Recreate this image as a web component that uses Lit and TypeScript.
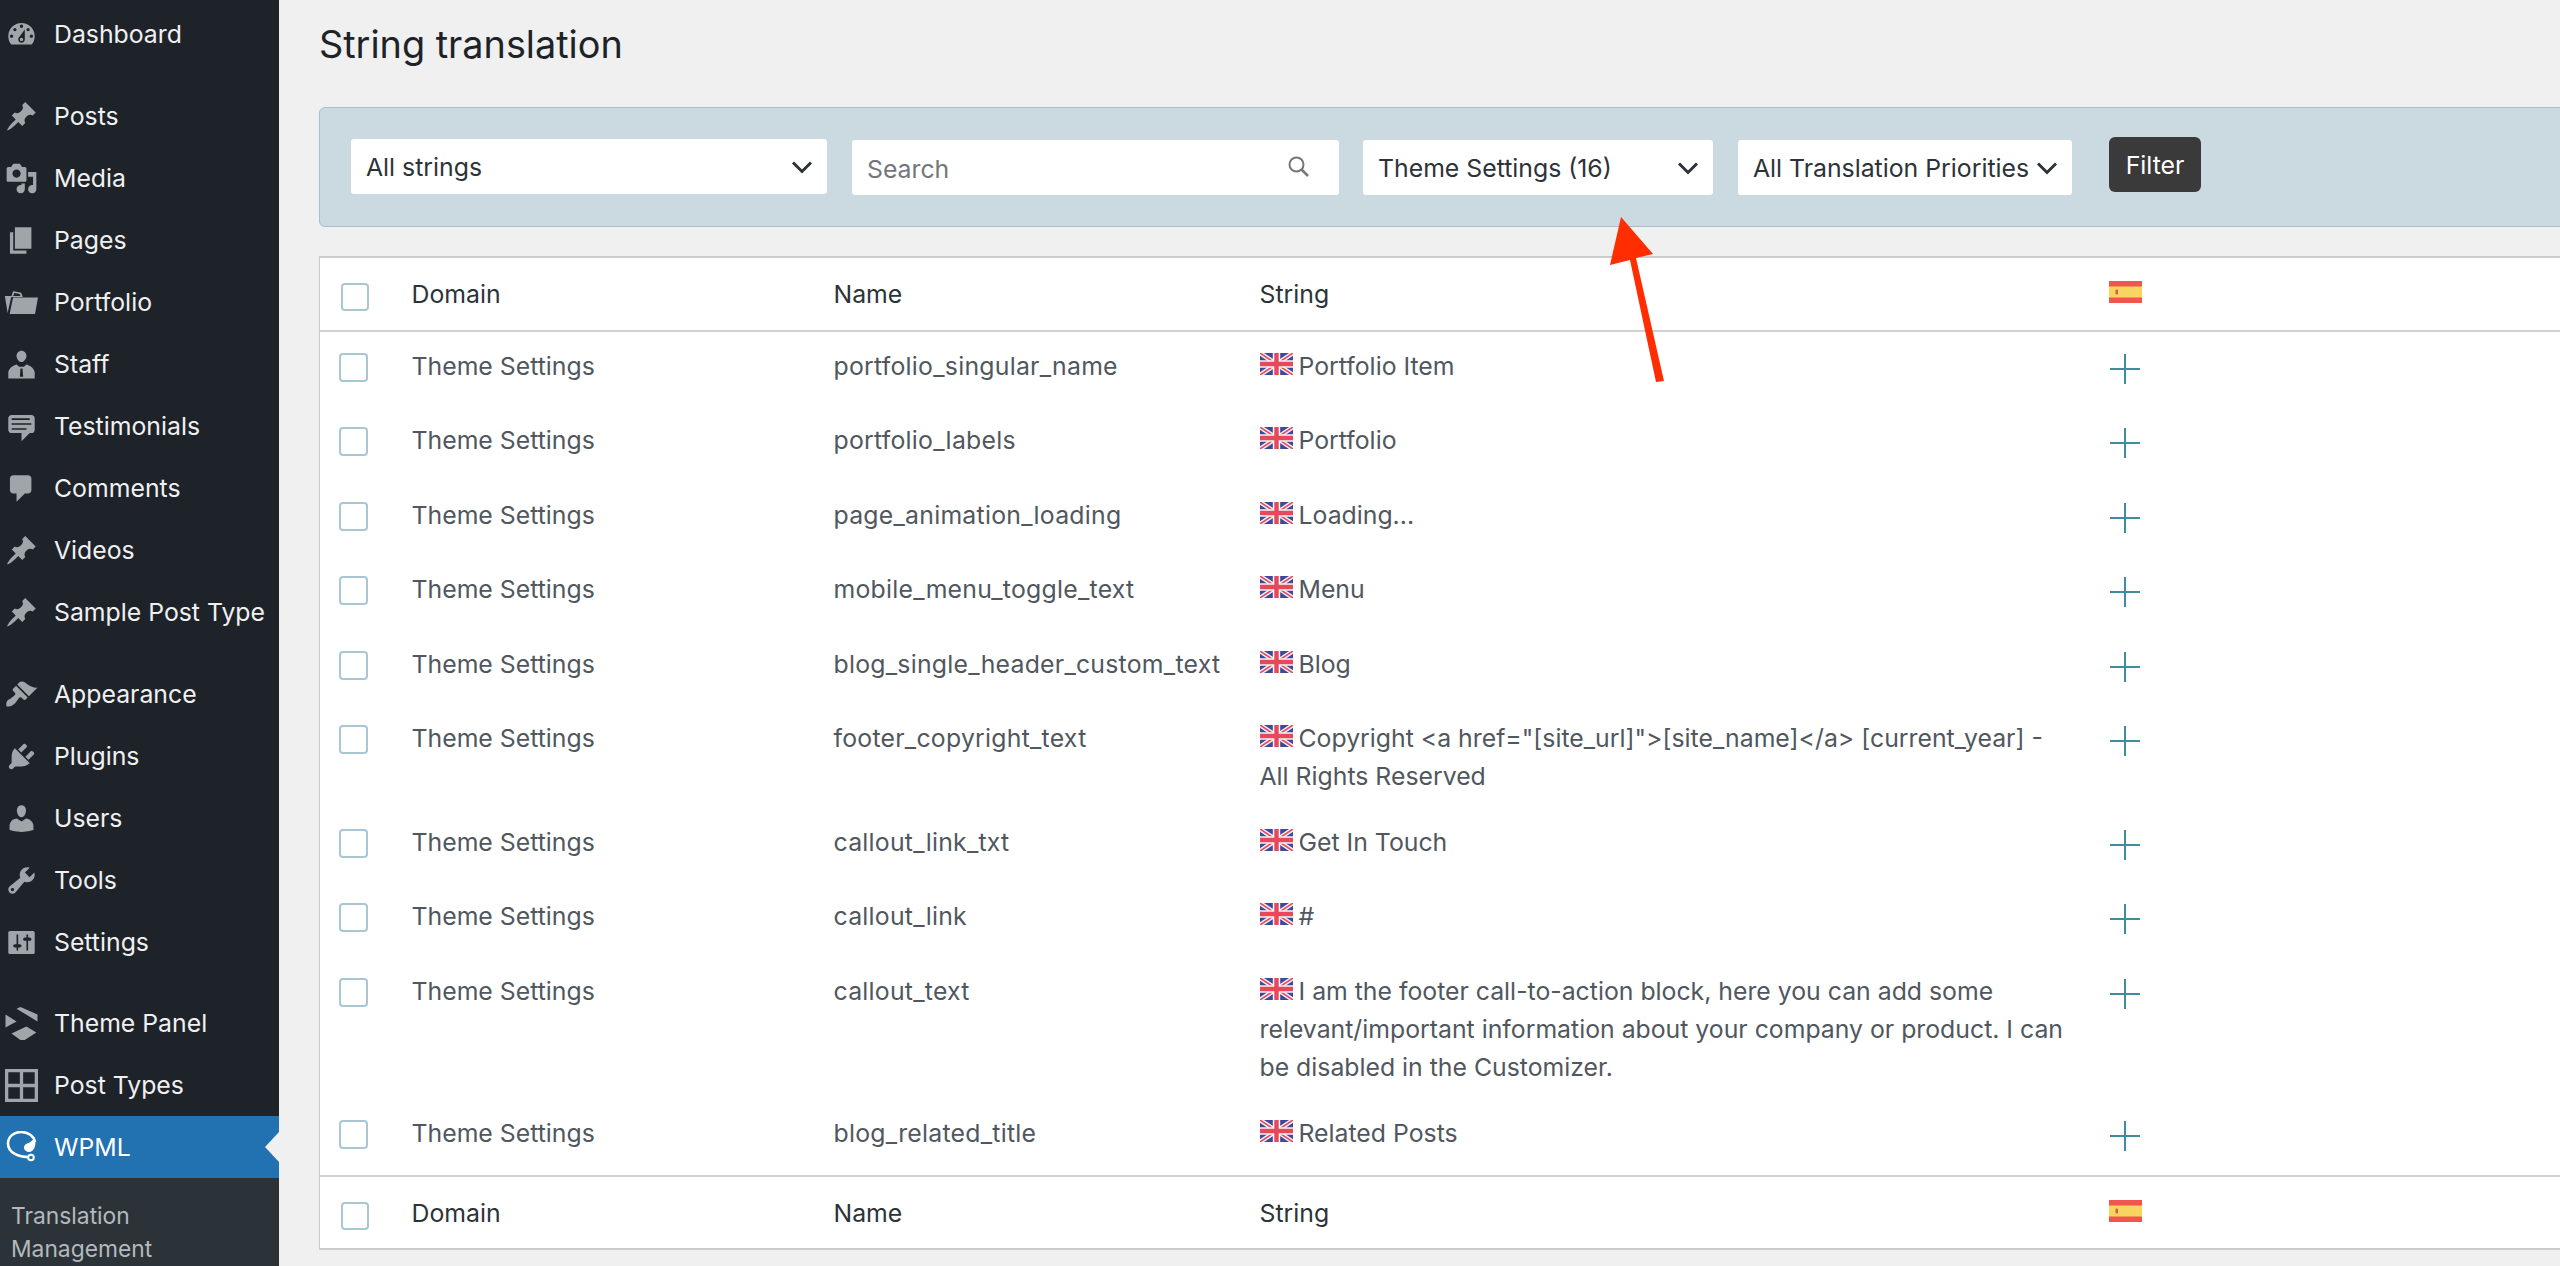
import { LitElement, html, css } from 'lit';
import { customElement } from 'lit/decorators.js';

const PIN = 'M10.44 3.02l1.82-1.82 6.36 6.35-1.83 1.82c-1.05-.68-2.48-.57-3.41.36l-.75.75c-.92.93-1.04 2.35-.35 3.41l-1.83 1.82-2.41-2.41-2.8 2.79c-.42.42-3.38 2.71-3.8 2.29s1.86-3.39 2.28-3.81l2.79-2.79L4.1 9.36l1.83-1.82c1.05.69 2.48.57 3.4-.36l.75-.75c.93-.92 1.05-2.35.36-3.41z';

const ICONS: Record<string, string> = {
  dashboard: 'M3.76 16h12.48c1.1-1.37 1.76-3.11 1.76-5 0-4.42-3.58-8-8-8s-8 3.58-8 8c0 1.89.66 3.63 1.76 5zM10 4c.55 0 1 .45 1 1s-.45 1-1 1-1-.45-1-1 .45-1 1-1zM6 6c.55 0 1 .45 1 1s-.45 1-1 1-1-.45-1-1 .45-1 1-1zm8 0c.55 0 1 .45 1 1s-.45 1-1 1-1-.45-1-1 .45-1 1-1zm-5.37 5.55L12 7v6c0 1.1-.9 2-2 2s-2-.9-2-2c0-.57.24-1.08.63-1.45zM4 10c.55 0 1 .45 1 1s-.45 1-1 1-1-.45-1-1 .45-1 1-1zm12 0c.55 0 1 .45 1 1s-.45 1-1 1-1-.45-1-1 .45-1 1-1zm-5 3c0-.55-.45-1-1-1s-1 .45-1 1 .45 1 1 1 1-.45 1-1z',
  pin: PIN,
  media: 'M13 11V4c0-.55-.45-1-1-1h-1.67L9 1H5L3.67 3H2c-.55 0-1 .45-1 1v7c0 .55.45 1 1 1h10c.55 0 1-.45 1-1zM7 4.5c1.38 0 2.5 1.12 2.5 2.5S8.38 9.5 7 9.5 4.5 8.38 4.5 7 5.62 4.5 7 4.5zM14 6h5v10.5c0 1.38-1.12 2.5-2.5 2.5S14 17.88 14 16.5s1.12-2.5 2.5-2.5c.17 0 .34.02.5.05V9h-3V6zm-4 8.05V13h2v3.5c0 1.38-1.12 2.5-2.5 2.5S7 17.88 7 16.5 8.12 14 9.5 14c.17 0 .34.02.5.05z',
  page: 'M6 15V2h10v13H6zm-1 1h8v2H3V5h2v11z',
  portfolio: 'M4 6H.4c-.3 0-.5.2-.4.6L1.6 16.4 3.6 7.4c.1-.5.5-.7.9-.7H10.8L10 4.6C9.900 4.200 9.600 3.900 9.200 3.900L5.400 3.200c-.4 0-.7.2-.8.6L4 6zm1 0l.6-1.8 3.3.6.4 1.2H5zM2.800 17h15.400l1.800-10H4.900L2.800 17z',
  staff: 'M10 1.6c1.7 0 3 1.4 3 3.1 0 1.9-1.3 3.8-3 3.8s-3-1.9-3-3.8c0-1.7 1.3-3.1 3-3.1zM2 18.5V15c0-2.5 2.6-4.2 5-5l1.6 1.4h2.8L13 10c2.4.8 5 2.5 5 5v3.5H2zM9.400 12.400l-.4 5h2l-.4-5H9.400z',
  testimonial: 'M4 3h12c.55 0 1.02.2 1.41.59S18 4.45 18 5v7c0 .55-.2 1.02-.59 1.41S16.55 14 16 14h-1l-5 5v-5H4c-.55 0-1.02-.2-1.41-.59S2 12.55 2 12V5c0-.55.2-1.02.59-1.41S3.45 3 4 3zm11 2H4v1h11V5zm1 3H4v1h12V8zm-3 3H4v1h9v-1z',
  comments: 'M5 2h9c1.1 0 2 .9 2 2v7c0 1.1-.9 2-2 2h-2l-5 5v-5H5c-1.1 0-2-.9-2-2V4c0-1.1.9-2 2-2z',
  appearance: 'M14.48 11.06L7.41 3.99l1.5-1.5c.5-.56 2.3-.47 3.51.32 1.21.8 1.43 1.28 2.91 2.1 1.18.64 2.45 1.26 4.45.85zm-.71.71L6.7 4.7 4.93 6.47c-.39.39-.39 1.02 0 1.41l1.06 1.06c.39.39.39 1.03 0 1.42-.6.6-1.43 1.11-2.21 1.69-.35.26-.7.53-1.01.84C1.43 13.23.4 14.85.89 17.11c2.26.49 3.88-.54 5.22-1.88.31-.31.58-.66.84-1.01.58-.78 1.09-1.61 1.69-2.21.39-.39 1.03-.39 1.42 0l1.06 1.06c.39.39 1.02.39 1.41 0z',
  plugins: 'M13.11 4.36L9.87 7.6 8 5.73l3.24-3.24c.35-.34 1.05-.2 1.56.32.52.51.66 1.21.31 1.55zm-8 1.77l.91-1.12 9.01 9.01-1.19.84c-.71.71-2.63 1.16-3.82 1.16H6.14L4.9 17.26c-.59.59-1.54.59-2.12 0-.59-.58-.59-1.53 0-2.12l1.24-1.24v-3.88c0-1.13.4-3.19 1.09-3.89zm7.26 3.97l3.24-3.24c.34-.35 1.04-.21 1.55.31.52.51.66 1.21.31 1.55l-3.24 3.25z',
  users: 'M10 9.25c-2.27 0-2.73-3.44-2.73-3.44C7 4.02 7.82 2 9.97 2c2.16 0 2.98 2.02 2.71 3.81 0 0-.41 3.44-2.68 3.44zm0 2.57L12.72 10c2.39 0 4.52 2.33 4.52 4.53v2.49s-3.65 1.13-7.24 1.13c-3.65 0-7.24-1.13-7.24-1.13v-2.49c0-2.25 1.94-4.48 4.47-4.48z',
  tools: 'M16.68 9.77c-1.34 1.34-3.3 1.67-4.95.99l-5.41 6.52c-.99.99-2.59.99-3.58 0s-.99-2.59 0-3.57l6.52-5.42c-.68-1.65-.35-3.61.99-4.95 1.28-1.28 3.12-1.62 4.72-1.06l-2.89 2.89 2.82 2.82 2.86-2.87c.53 1.58.18 3.39-1.08 4.65zM3.81 16.21c.4.39 1.04.39 1.43 0 .4-.4.4-1.04 0-1.43-.39-.4-1.03-.4-1.43 0-.39.39-.39 1.03 0 1.43z',
  settings: 'M18 16V4c0-.55-.45-1-1-1H3c-.55 0-1 .45-1 1v12c0 .55.45 1 1 1h14c.55 0 1-.45 1-1zM8 11h1c.55 0 1 .45 1 1s-.45 1-1 1H8v1.5c0 .28-.22.5-.5.5s-.5-.22-.5-.5V13H6c-.55 0-1-.45-1-1s.45-1 1-1h1V5.5c0-.28.22-.5.5-.5s.5.22.5.5V11zm5-2h-1c-.55 0-1-.45-1-1s.45-1 1-1h1V5.5c0-.28.22-.5.5-.5s.5.22.5.5V7h1c.55 0 1 .45 1 1s-.45 1-1 1h-1v5.5c0 .28-.22.5-.5.5s-.5-.22-.5-.5V9z',
  panel: 'M7 1 9.400 0 19.700 4.500V8.800zM.3 4.500 7 8.800 .3 12.400zM3.900 16 13 11.800 19 15.500 10.600 20.900z',
  grid: 'M0 0H20V20H0zM2 2V9H9V2zM11 2V9H18V2zM2 11V18H9V11zM11 11V18H18V11z',
};

interface MenuItem {
  label: string;
  icon: string;
  gap?: number;
}

const MENU: MenuItem[] = [
  { label: 'Dashboard', icon: 'dashboard' },
  { label: 'Posts', icon: 'pin', gap: 1 },
  { label: 'Media', icon: 'media' },
  { label: 'Pages', icon: 'page' },
  { label: 'Portfolio', icon: 'portfolio' },
  { label: 'Staff', icon: 'staff' },
  { label: 'Testimonials', icon: 'testimonial' },
  { label: 'Comments', icon: 'comments' },
  { label: 'Videos', icon: 'pin' },
  { label: 'Sample Post Type', icon: 'pin' },
  { label: 'Appearance', icon: 'appearance', gap: 1 },
  { label: 'Plugins', icon: 'plugins' },
  { label: 'Users', icon: 'users' },
  { label: 'Tools', icon: 'tools' },
  { label: 'Settings', icon: 'settings' },
  { label: 'Theme Panel', icon: 'panel', gap: 2 },
  { label: 'Post Types', icon: 'grid' },
];

const ROWS: [string, string][] = [
  ['portfolio_singular_name', 'Portfolio Item'],
  ['portfolio_labels', 'Portfolio'],
  ['page_animation_loading', 'Loading...'],
  ['mobile_menu_toggle_text', 'Menu'],
  ['blog_single_header_custom_text', 'Blog'],
  ['footer_copyright_text', 'Copyright <a href="[site_url]">[site_name]</a> [current_year] - All Rights Reserved'],
  ['callout_link_txt', 'Get In Touch'],
  ['callout_link', '#'],
  ['callout_text', 'I am the footer call-to-action block, here you can add some relevant/important information about your company or product. I can be disabled in the Customizer.'],
  ['blog_related_title', 'Related Posts'],
];

const chevron = html`<svg class="chev" viewBox="0 0 22 14"><path d="M2 2.500 11 11.500 20 2.500" fill="none" stroke="#2c3338" stroke-width="3"/></svg>`;

const ukFlag = html`<svg class="uk" viewBox="0 0 33 22">
  <rect width="33" height="22" fill="#41479b"/>
  <path d="M0 0 33 22M33 0 0 22" stroke="#f5f5f5" stroke-width="4.400"/>
  <path d="M0 0 33 22M33 0 0 22" stroke="#e8485c" stroke-width="1.600"/>
  <path d="M16.500 0V22M0 11H33" stroke="#f5f5f5" stroke-width="7.400"/>
  <path d="M16.500 0V22M0 11H33" stroke="#e8485c" stroke-width="4.400"/>
</svg>`;

const esFlag = html`<svg class="es" viewBox="0 0 33 22">
  <rect width="33" height="22" fill="#f1554f"/>
  <rect y="5.500" width="33" height="11" fill="#f8d55e"/>
  <rect x="6.500" y="8.500" width="2.500" height="5" rx="1" fill="#e2574c"/>
</svg>`;

const plus = html`<svg class="plus" viewBox="0 0 30 30"><path d="M15 0V30M0 15H30" stroke="#3f8c9c" stroke-width="2"/></svg>`;

@customElement('app-root')
export class AppRoot extends LitElement {
  static styles = css`
    :host {
      display: block;
      position: relative;
      width: 2560px;
      height: 1266px;
      overflow: hidden;
      background: #f0f0f1;
      font-family: Inter, 'Noto Sans', sans-serif;
      font-size: 24.8px;
      color: #50575e;
    }
    * { box-sizing: border-box; }
    .page { display: flex; height: 1266px; }

    .side {
      flex: 0 0 279px;
      background: #1e2329;
      padding-top: 3px;
      overflow: hidden;
    }
    .item {
      display: flex;
      align-items: center;
      height: 62px;
      padding-left: 5px;
      color: #f0f0f1;
      white-space: nowrap;
    }
    .item.gap1 { margin-top: 20px; }
    .item.gap2 { margin-top: 19px; }
    .item svg { width: 33px; height: 33px; margin-right: 16px; fill: #a0a5aa; flex: none; }
    .item.current {
      position: relative;
      background: #2271b1;
      color: #fff;
    }
    .item.current svg { fill: none; }
    .item.current::after {
      content: '';
      position: absolute;
      right: 0;
      top: 16px;
      border: 15px solid transparent;
      border-right: 14px solid #f0f0f1;
      border-left: 0;
    }
    .sub {
      height: 100%;
      background: #2c3338;
      padding: 21px 11px;
      color: #b4b9be;
      font-size: 22.8px;
      line-height: 33px;
    }

    .main { flex: 1; min-width: 0; padding-left: 40px; overflow: hidden; }
    h1 {
      margin: 19px 0 38px;
      font-size: 37.8px;
      line-height: 50px;
      font-weight: 400;
      color: #1d2327;
    }

    .bar {
      display: flex;
      align-items: flex-start;
      width: 2300px;
      height: 120px;
      padding: 29px 0 0 31px;
      background: #cbd9e0;
      border: 1.5px solid #a6bfcd;
      border-radius: 6px;
    }
    .field {
      display: flex;
      align-items: center;
      justify-content: space-between;
      flex: none;
      height: 55px;
      margin-top: 3px;
      padding: 0 15px;
      background: #fff;
      border-radius: 3px;
      color: #2c3338;
      white-space: nowrap;
    }
    .chev { width: 22px; height: 14px; flex: none; margin-right: -1px; }
    .f1 { width: 476px; margin-top: 2px; margin-right: 25px; }
    .f2 { width: 487px; margin-right: 24px; color: #72777c; padding-top: 2px; }
    .f2 svg { width: 26px; height: 26px; margin-right: 12px; margin-top: -3px; }
    .f3 { width: 350px; margin-right: 25px; }
    .f4 { width: 334px; margin-right: 37px; padding-right: 15px; }
    .filter {
      width: 92px;
      height: 55px;
      line-height: 57px;
      text-align: center;
      flex: none;
      background: #3a3a3a;
      color: #fff;
      border-radius: 6px;
    }

    .table {
      width: 2300px;
      margin-top: 29px;
      background: #fff;
      border: 2px solid #c9cbcd;
      border-right: 0;
      border-left-width: 1.5px;
    }
    .row, .head, .foot {
      display: grid;
      grid-template-columns: 91.5px 422px 426px 849px 1fr;
      line-height: 38px;
    }
    .row { min-height: 74.4px; }
    .row:nth-last-child(2) { min-height: 76.5px; }
    .row > div { padding-top: 15px; padding-bottom: 13px; }
    .row .str { padding-right: 39px; }
    .row .name { letter-spacing: 0.25px; }
    .head {
      height: 74px;
      padding-top: 17px;
      border-bottom: 2px solid #cfd1d3;
      color: #2c3338;
    }
    .foot {
      height: 73px;
      padding-top: 17px;
      border-top: 2px solid #cfd1d3;
      color: #2c3338;
    }
    .row > .cb-cell, .row > .act { padding: 0; }
    .cb {
      display: block;
      width: 29px;
      height: 29px;
      background: #fff;
      border: 2px solid #a9c6d3;
      border-radius: 4px;
    }
    .row .cb { margin: 21px 0 0 19px; }
    .head .cb { margin: 8px 0 0 21px; width: 28px; height: 28px; }
    .foot .cb { margin: 8px 0 0 21px; width: 28px; height: 28px; }
    .uk { width: 33px; height: 22px; vertical-align: 0; margin-right: 6px; }
    .es { display: block; width: 33px; height: 22px; }
    .head .es { margin-top: 6px; }
    .foot .es { margin-top: 6px; }
    .plus { display: block; width: 30px; height: 30px; margin: 22px 0 0 1px; }

    .arrow { position: absolute; left: 1600px; top: 210px; width: 80px; height: 180px; }
  `;

  renderIcon(name: string) {
    return html`<svg viewBox="0 0 20 20"><path fill-rule="evenodd" d=${ICONS[name]}/></svg>`;
  }

  render() {
    return html`
      <div class="page">
        <nav class="side">
          ${MENU.map(m => html`<div class="item ${m.gap ? `gap${m.gap}` : ''}">${this.renderIcon(m.icon)}${m.label}</div>`)}
          <div class="item current">
            <svg viewBox="0 0 33 33">
              <path d="M24 26C14 26 3 22 3 12.500 3 5.500 9 1 16 1 23 1 29 5 30 11" stroke="#fff" stroke-width="2.600" fill="none"/>
              <path d="M29.500 6C31 11 31 17 27 20 24 22 19.500 20.500 19 17 18.800 13.500 22 12.500 24.500 11.500 26.500 10.500 28.500 8.500 29.500 6z" fill="#fff"/>
              <circle cx="26" cy="26.500" r="2.800" stroke="#fff" stroke-width="2" fill="none"/>
            </svg>
            WPML
          </div>
          <div class="sub">Translation<br />Management</div>
        </nav>
        <main class="main">
          <h1>String translation</h1>
          <div class="bar">
            <div class="field f1">All strings ${chevron}</div>
            <div class="field f2">Search
              <svg viewBox="0 0 26 26"><circle cx="10.500" cy="10.500" r="7" fill="none" stroke="#777" stroke-width="2"/><path d="M15.500 15.500 22 22" stroke="#777" stroke-width="2.500"/></svg>
            </div>
            <div class="field f3">Theme Settings (16) ${chevron}</div>
            <div class="field f4">All Translation Priorities ${chevron}</div>
            <div class="filter">Filter</div>
          </div>
          <div class="table">
            <div class="head">
              <div><span class="cb"></span></div><div>Domain</div><div>Name</div><div>String</div><div>${esFlag}</div>
            </div>
            ${ROWS.map(([name, text]) => html`
              <div class="row">
                <div class="cb-cell"><span class="cb"></span></div>
                <div>Theme Settings</div>
                <div class="name">${name}</div>
                <div class="str">${ukFlag}${text}</div>
                <div class="act">${plus}</div>
              </div>`)}
            <div class="foot">
              <div><span class="cb"></span></div><div>Domain</div><div>Name</div><div>String</div><div>${esFlag}</div>
            </div>
          </div>
        </main>
      </div>
      <svg class="arrow" viewBox="1600 210 80 180">
        <path d="M1621 217 1653 254 1636 258 1664 381 1656 382 1630 260 1610 265z" fill="#ff2d00"/>
      </svg>
    `;
  }
}
